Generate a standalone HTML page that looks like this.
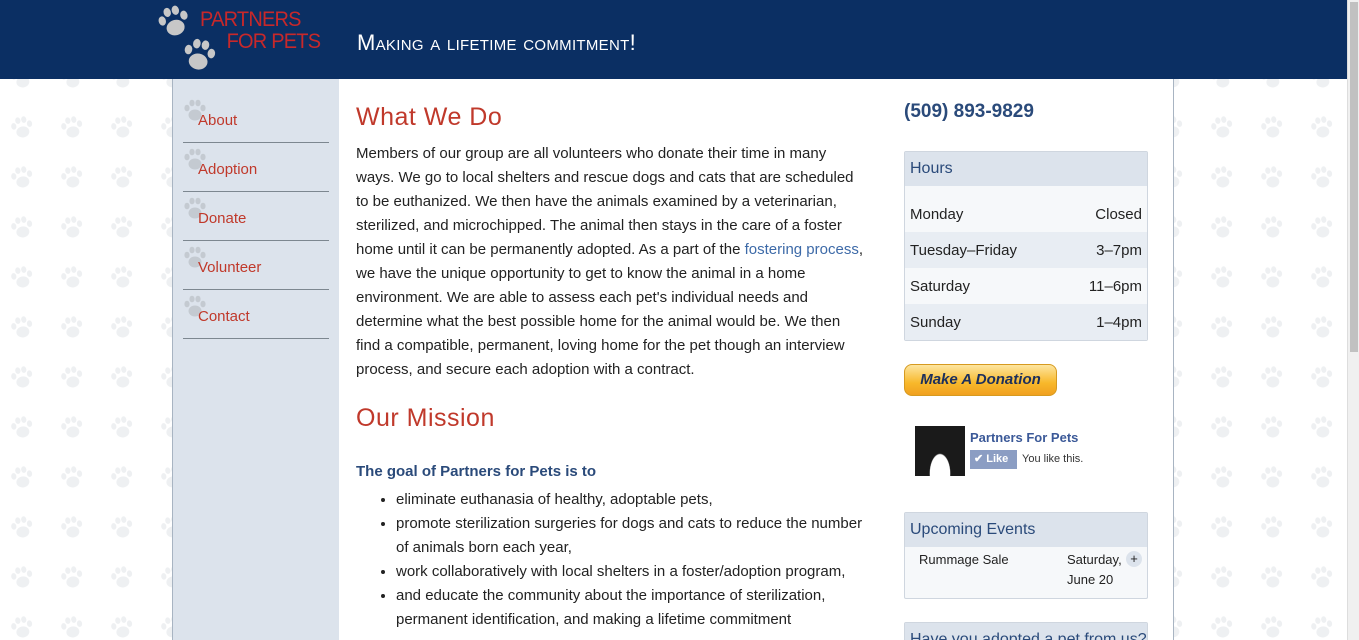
<!DOCTYPE html>
<html><head><meta charset="utf-8"><style>
*{margin:0;padding:0;box-sizing:border-box}
html,body{width:1359px;height:640px;overflow:hidden}
body{background:#fff;font-family:"Liberation Sans",sans-serif;position:relative}
#bg{position:absolute;left:0;top:0}
.hdr{position:absolute;left:0;top:0;width:1347px;height:79px;background:#0b2f63}
.scroll{position:absolute;right:0;top:0;width:12px;height:640px;background:#f0f0f0;border-left:1px solid #ddd}
.scroll div{position:absolute;left:2px;top:2px;width:8px;height:350px;background:#c1c1c1}
.logo{position:absolute;left:200px;top:9px;color:#c8282a;font-size:21px;line-height:22px;letter-spacing:-0.8px;transform:scaleX(0.95);transform-origin:left}
.tag{position:absolute;left:357px;top:30px;color:#fff;font-size:22px;font-variant:small-caps;letter-spacing:0.3px}
.wrap{position:absolute;left:172px;top:79px;width:1002px;height:561px;background:#fff;border-left:1px solid #a8b4c2;border-right:1px solid #a8b4c2;overflow:hidden}
.side{position:absolute;left:0;top:0;width:166px;height:561px;background:#dce3ec}
.nav{position:absolute;left:10px;width:146px;height:49px;border-bottom:1px solid #7d8790}
.nav span{position:absolute;left:15px;top:18px;color:#c0392b;font-size:15px}
.nav svg{position:absolute;left:0;top:4px}
.main{position:absolute;left:183px;top:0;width:511px;color:#222;font-size:15px;line-height:24px}
h2{color:#c0392b;font-weight:normal;font-size:25px;letter-spacing:0.5px}
a{color:#3d6aa8;text-decoration:none}
.blue{color:#2a4a7a;font-weight:bold;font-size:15px}
ul{margin-left:40px}
.right{position:absolute;left:731px;top:0;width:244px}
.box{border:1px solid #cfd6df;border-radius:2px;background:#f6f8fa}
.box h3{background:#dce3ec;color:#2a4a7a;font-weight:normal;font-size:16px;padding:8px 5px;height:34px;white-space:nowrap;overflow:hidden}
.row{display:flex;justify-content:space-between;height:36px;align-items:center;padding:0 5px;font-size:15px;color:#222}
</style></head><body>
<svg id="bg" width="1347" height="640">
<defs>
<g id="paw"><ellipse cx="12" cy="17" rx="6.5" ry="5.5"/><ellipse cx="4" cy="10" rx="2.6" ry="3.3"/><ellipse cx="9" cy="5" rx="2.6" ry="3.3"/><ellipse cx="15" cy="5" rx="2.6" ry="3.3"/><ellipse cx="20" cy="10" rx="2.6" ry="3.3"/></g>
<pattern id="pp" width="50" height="50" patternUnits="userSpaceOnUse" x="0" y="5"><use href="#paw" fill="#eef0f2" transform="translate(10,10) rotate(-10 12 12)"/></pattern>
</defs>
<rect width="1347" height="640" fill="url(#pp)"/>
</svg>
<div class="hdr"></div>
<svg style="position:absolute;left:156px;top:3px" width="70" height="72"><use href="#paw" fill="#c7c7c7" transform="translate(1,1) scale(1.4) rotate(-15 12 12)"/><use href="#paw" fill="#c7c7c7" transform="translate(26,34) scale(1.45) rotate(10 12 12)"/></svg>
<div class="logo">PARTNERS<br><span style="margin-left:28px">FOR PETS</span></div>
<div class="tag">Making a lifetime commitment!</div>
<div class="wrap">
<div class="side">
<div class="nav" style="top:15px"><svg width="30" height="30"><use href="#paw" fill="#c4cad1"/></svg><span>About</span></div>
<div class="nav" style="top:64px"><svg width="30" height="30"><use href="#paw" fill="#c4cad1"/></svg><span>Adoption</span></div>
<div class="nav" style="top:113px"><svg width="30" height="30"><use href="#paw" fill="#c4cad1"/></svg><span>Donate</span></div>
<div class="nav" style="top:162px"><svg width="30" height="30"><use href="#paw" fill="#c4cad1"/></svg><span>Volunteer</span></div>
<div class="nav" style="top:211px"><svg width="30" height="30"><use href="#paw" fill="#c4cad1"/></svg><span>Contact</span></div>
</div>
<div class="main">
<h2 style="margin-top:26px;height:37px">What We Do</h2>
<p>Members of our group are all volunteers who donate their time in many ways. We go to local shelters and rescue dogs and cats that are scheduled to be euthanized. We then have the animals examined by a veterinarian, sterilized, and microchipped. The animal then stays in the care of a foster home until it can be permanently adopted. As a part of the <a>fostering process</a>, we have the unique opportunity to get to know the animal in a home environment. We are able to assess each pet's individual needs and determine what the best possible home for the animal would be. We then find a compatible, permanent, loving home for the pet though an interview process, and secure each adoption with a contract.</p>
<h2 style="margin-top:24px;height:54px">Our Mission</h2>
<p class="blue">The goal of Partners for Pets is to</p>
<ul style="margin-top:4px"><li>eliminate euthanasia of healthy, adoptable pets,</li><li>promote sterilization surgeries for dogs and cats to reduce the number of animals born each year,</li><li>work collaboratively with local shelters in a foster/adoption program,</li><li>and educate the community about the importance of sterilization, permanent identification, and making a lifetime commitment</li></ul>
</div>
<div class="right">
<div style="color:#2a4a7a;font-weight:bold;font-size:19px;margin-top:22px;height:50px">(509) 893-9829</div>
<div class="box"><h3>Hours</h3>
<div style="padding-top:10px"><div class="row" style="background:#f6f8fa">Monday<span>Closed</span></div><div class="row" style="background:#e8edf3">Tuesday–Friday<span>3–7pm</span></div><div class="row" style="background:#f6f8fa">Saturday<span>11–6pm</span></div><div class="row" style="background:#e8edf3">Sunday<span>1–4pm</span></div></div></div>
<div style="margin-top:23px;width:153px;height:32px;border-radius:8px;background:linear-gradient(#fde5a0,#f8b82a 60%,#f0a020);border:1px solid #d69a20;text-align:center;font:italic bold 15px 'Liberation Sans',sans-serif;color:#1c2f5c;line-height:30px">Make A Donation</div>
<div style="position:relative;height:116px">
<div style="position:absolute;left:11px;top:30px;width:50px;height:50px;background:radial-gradient(ellipse at 50% 95%,#fff 28%,transparent 30%),#1a1a1a"></div>
<div style="position:absolute;left:66px;top:34px;color:#3b5998;font-size:13px;font-weight:bold">Partners For Pets</div>
<div style="position:absolute;left:66px;top:54px;width:47px;height:19px;background:#8b9dc3;color:#fff;font-size:11px;font-weight:bold;line-height:19px;padding-left:4px">✔ Like</div>
<div style="position:absolute;left:118px;top:57px;font-size:11px;color:#333">You like this.</div>
</div>
<div class="box" style="height:87px"><h3>Upcoming Events</h3>
<div style="position:relative;font-size:13px;color:#222;line-height:20px"><span style="position:absolute;left:14px;top:3px">Rummage Sale</span><span style="position:absolute;left:162px;top:3px">Saturday,<br>June 20</span><span style="position:absolute;left:221px;top:4px;width:16px;height:16px;border-radius:50%;background:#dce3ec;text-align:center;line-height:15px">+</span></div></div>
<div class="box" style="margin-top:23px;height:40px"><h3>Have you adopted a pet from us?</h3></div>
</div>
</div>
<div class="scroll"><div></div></div>
</body></html>
